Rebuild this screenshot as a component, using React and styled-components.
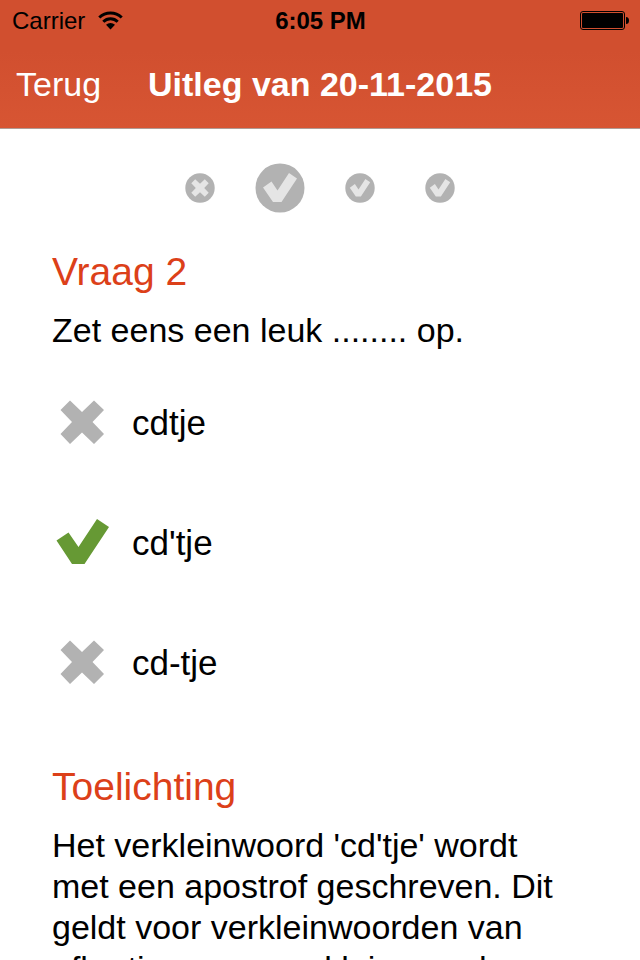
import styled, { createGlobalStyle } from 'styled-components';

const GlobalStyle = createGlobalStyle`
  * {
    box-sizing: border-box;
  }
  body {
    margin: 0;
    background: #fff;
    color: #000;
    font-family: 'Liberation Sans', Arial, sans-serif;
  }
`;

const Screen = styled.div`
  height: 100vh;
  overflow-x: hidden;
  overflow-y: auto;
  scrollbar-width: none;
`;

const Header = styled.header`
  background: linear-gradient(#d14f2f 40%, #d75533);
  border-bottom: 1px solid #b09a94;
`;

const StatusBar = styled.div`
  display: grid;
  grid-template-columns: 1fr auto 1fr;
  align-items: center;
  height: 41px;
  padding: 0 11px 0 12px;
  font-size: 24px;
`;

const Carrier = styled.span`
  display: flex;
  align-items: center;
  gap: 13px;
`;

const Time = styled.time`
  font-weight: bold;
`;

const BatteryIcon = styled.svg`
  justify-self: end;
`;

const NavBar = styled.nav`
  display: grid;
  grid-template-columns: 1fr auto 1fr;
  align-items: center;
  height: 87px;
  padding: 0 16px;
  color: #fff;
`;

const BackButton = styled.button`
  justify-self: start;
  padding: 0;
  border: none;
  background: none;
  color: inherit;
  font: inherit;
  font-size: 34px;
  cursor: pointer;
`;

const Title = styled.h1`
  margin: 0;
  font-size: 34px;
  font-weight: bold;
`;

const Steps = styled.div`
  display: flex;
  justify-content: center;
  height: 118px;
`;

const Step = styled.button`
  display: flex;
  align-items: center;
  justify-content: center;
  width: 80px;
  padding: 0;
  border: none;
  background: none;
  cursor: pointer;
`;

const Content = styled.main`
  padding: 0 72px 40px 52px;
`;

const Heading = styled.h2`
  margin: 0;
  color: #dc4019;
  font-size: 39px;
  font-weight: normal;
  line-height: 50px;
`;

const Text = styled.p`
  margin: 13px 0 0;
  font-size: 34px;
  line-height: 41px;
`;

const Answers = styled.ul`
  margin: 12px 0 39px;
  padding: 0;
  list-style: none;
`;

const Answer = styled.li`
  display: flex;
  align-items: center;
  gap: 20px;
  height: 120px;
  font-size: 35px;
`;

const CROSS = 'M8.500 17L18 7.500L30 19L42 7.500L52 17L40.500 29L52 41L42 51L30 39.500L18 51L8.500 41L20 29Z';
const CHECK = 'M4.500 27.500L16.500 19.500L26.500 34L45 6L57 14L32.500 51H20Z';

const MarkIcon = ({ correct }) => (
  <svg width="60" height="60" viewBox="0 0 60 60" role="img" aria-label={correct ? 'Goed' : 'Fout'}>
    <path fill={correct ? '#669934' : '#b2b2b2'} d={correct ? CHECK : CROSS} />
  </svg>
);

const StepIcon = ({ correct, size }) => (
  <svg width={size} height={size} viewBox="0 0 50 50" aria-hidden="true">
    <circle cx="25" cy="25" r="24.500" fill="#b2b2b2" />
    {correct ? (
      <path fill="#e5e5e5" d="M8 24.500L16.500 18.500L22.500 27.500L34 10L42 15.500L26.500 39H18Z" />
    ) : (
      <path fill="#e5e5e5" d="M10.500 17L17 10.500L25 18L33 10.500L39.500 17L32 25L39.500 33L33 39.500L25 32L17 39.500L10.500 33L18 25Z" />
    )}
  </svg>
);

const steps = [{ correct: false }, { correct: true }, { correct: true }, { correct: true }];

const answers = [
  { text: 'cdtje', correct: false },
  { text: "cd'tje", correct: true },
  { text: 'cd-tje', correct: false },
];

const current = 1;

const App = () => (
  <Screen>
    <GlobalStyle />
    <Header>
      <StatusBar>
        <Carrier>
          Carrier
          <svg width="25" height="19" viewBox="0 0 25 19" aria-hidden="true">
            <g fill="none" stroke="#000" strokeWidth="3">
              <path d="M1.300 6.500A16 16 0 0 1 23.700 6.500" />
              <path d="M5.300 10.800A10.300 10.300 0 0 1 19.700 10.800" />
            </g>
            <path d="M8 13.800A6.500 6.500 0 0 1 17 13.800L12.500 18.500Z" />
          </svg>
        </Carrier>
        <Time>6:05 PM</Time>
        <BatteryIcon width="49" height="19" viewBox="0 0 49 19" aria-hidden="true">
          <rect x="0.500" y="0.500" width="44" height="18" rx="2.500" fill="none" stroke="#000" />
          <rect x="2" y="2" width="41" height="15" rx="1" />
          <path d="M46 6Q49 6 49 9.500T46 13Z" />
        </BatteryIcon>
      </StatusBar>
      <NavBar>
        <BackButton type="button">Terug</BackButton>
        <Title>Uitleg van 20-11-2015</Title>
      </NavBar>
    </Header>
    <Steps>
      {steps.map((step, i) => (
        <Step key={i} type="button" aria-label={`Vraag ${i + 1}`}>
          <StepIcon correct={step.correct} size={i === current ? 50 : 30} />
        </Step>
      ))}
    </Steps>
    <Content>
      <Heading>Vraag 2</Heading>
      <Text>Zet eens een leuk ........ op.</Text>
      <Answers>
        {answers.map((answer) => (
          <Answer key={answer.text}>
            <MarkIcon correct={answer.correct} />
            {answer.text}
          </Answer>
        ))}
      </Answers>
      <Heading>Toelichting</Heading>
      <Text>
        Het verkleinwoord 'cd'tje' wordt met een apostrof geschreven. Dit geldt voor
        verkleinwoorden van afkortingen en verkleinwoorden
      </Text>
    </Content>
  </Screen>
);

export default App;
